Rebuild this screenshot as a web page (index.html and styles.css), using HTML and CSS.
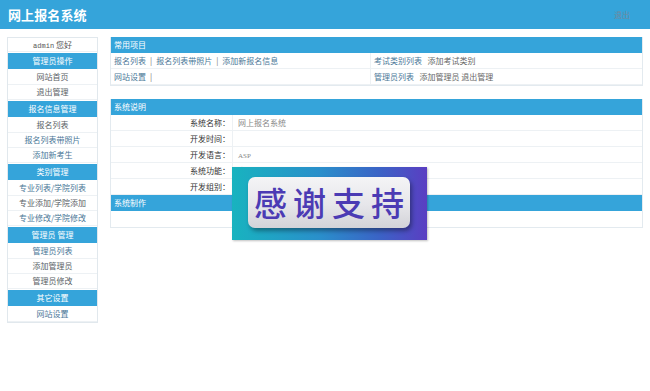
FILE: index.html
```html
<!DOCTYPE html>
<html lang="zh">
<head>
<meta charset="utf-8">
<title>网上报名系统</title>
<link rel="stylesheet" href="styles.css">
</head>
<body>
<header class="top">
  <div class="title">网上报名系统</div>
  <a class="logout">退出</a>
</header>
<div class="wrap">
  <aside class="side">
    <div class="item hello"><span class="mono">admin</span> 您好</div>
    <div class="head">管理员操作</div>
    <div class="item">网站首页</div>
    <div class="item">退出管理</div>
    <div class="head">报名信息管理</div>
    <div class="item">报名列表</div>
    <div class="item blue">报名列表带照片</div>
    <div class="item blue">添加新考生</div>
    <div class="head">类别管理</div>
    <div class="item blue">专业列表/学院列表</div>
    <div class="item">专业添加/学院添加</div>
    <div class="item blue">专业修改/学院修改</div>
    <div class="head">管理员 管理</div>
    <div class="item blue">管理员列表</div>
    <div class="item">添加管理员</div>
    <div class="item">管理员修改</div>
    <div class="head">其它设置</div>
    <div class="item blue">网站设置</div>
  </aside>
  <main class="main">
    <section class="box">
      <div class="bhead">常用项目</div>
      <div class="qrow">
        <div class="qcell left"><span class="lk">报名列表</span><span class="sep">|</span><span class="lk">报名列表带照片</span><span class="sep">|</span><span class="lk">添加新报名信息</span></div>
        <div class="qcell"><span class="lk">考试类别列表</span>&nbsp;&nbsp; <span class="gr">添加考试类别</span></div>
      </div>
      <div class="qrow">
        <div class="qcell left"><span class="lk">网站设置</span><span class="sep">|</span></div>
        <div class="qcell"><span class="lk">管理员列表</span>&nbsp;&nbsp; <span class="gr">添加管理员 退出管理</span></div>
      </div>
    </section>
    <section class="box second">
      <div class="bhead">系统说明</div>
      <div class="irow"><div class="lab">系统名称：</div><div class="val">网上报名系统</div></div>
      <div class="irow"><div class="lab">开发时间：</div><div class="val"></div></div>
      <div class="irow"><div class="lab">开发语言：</div><div class="val"><span class="serif">ASP</span></div></div>
      <div class="irow"><div class="lab">系统功能：</div><div class="val">审阅</div></div>
      <div class="irow"><div class="lab">开发组别：</div><div class="val"></div></div>
      <div class="bhead">系统制作</div>
      <div class="erow"></div>
    </section>
  </main>
</div>
<div class="thanks">
  <div class="plate">感谢支持</div>
</div>
</body>
</html>
```
FILE: styles.css
```css
* { box-sizing: border-box; }
body {
  margin: 0;
  background: #fff;
  font-family: "Noto Sans CJK SC", "Noto Sans", sans-serif;
  font-size: 8px;
  color: #555;
  position: relative;
  width: 650px;
  height: 391px;
  overflow: hidden;
}
.top {
  height: 29px;
  background: #35a4da;
  display: flex;
  align-items: center;
  justify-content: space-between;
  padding: 0 20px 0 8px;
}
.title {
  color: #fff;
  font-size: 13px;
  font-weight: 700;
  letter-spacing: 0.1px;
}
.logout {
  color: #74889a;
  font-size: 8px;
}
.wrap {
  display: flex;
  gap: 12px;
  padding: 8px 7px 0 7px;
}
.side {
  width: 91px;
  flex: none;
  border: 1px solid #e1e8ed;
  border-top: none;
}
.item {
  height: 15px;
  line-height: 14px;
  text-align: center;
  border-bottom: 1px solid #edf1f4;
  color: #5a5f66;
}
.item.blue { color: #4a7797; }
.hello { color: #555; border-top: 1px solid #e1e8ed; }
.mono {
  font-family: "Liberation Mono", monospace;
  font-size: 7px;
}
.head {
  height: 18px;
  line-height: 16px;
  background: #35a4da;
  border-top: 1px solid #fff;
  border-bottom: 1px solid #fff;
  color: #fff;
  text-align: center;
}
.main {
  flex: 1;
  min-width: 0;
}
.box {
  border: 1px solid #e3eaef;
  border-top: none;
}
.second { margin-top: 13px; }
.bhead {
  height: 16px;
  line-height: 15px;
  background: #35a4da;
  color: #fff;
  padding-left: 3px;
}
.qrow {
  display: flex;
  height: 16px;
  line-height: 15px;
  border-bottom: 1px solid #edf1f4;
}
.qcell {
  flex: 1;
  padding-left: 3px;
  color: #666;
}
.qcell.left {
  flex: none;
  width: 260px;
  border-right: 1px solid #edf1f4;
}
.sep {
  color: #777;
  margin: 0 4px;
}
.lk { color: #4a7797; }
.gr { color: #666; }
.irow {
  display: flex;
  height: 16px;
  line-height: 15px;
  border-bottom: 1px solid #edf1f4;
}
.lab {
  width: 122px;
  flex: none;
  text-align: right;
  color: #333;
  padding-right: 2px;
  border-right: 1px solid #edf1f4;
}
.val {
  flex: 1;
  padding-left: 5px;
  color: #888;
}
.serif {
  font-family: "Liberation Serif", serif;
  font-size: 7px;
}
.erow { height: 16px; }
.thanks {
  position: absolute;
  left: 232px;
  top: 167px;
  width: 195px;
  height: 73px;
  background: linear-gradient(90deg, #18b3bf 0%, #2a8fcb 45%, #3a64c6 75%, #5a3ec2 100%);
  padding: 10px 17px 12px 16px;
  box-shadow: 1px 1px 2px rgba(0,0,0,0.25);
}
.plate {
  height: 51px;
  border-radius: 7px;
  background: linear-gradient(180deg, #f4f4f6 0%, #e6e6ea 55%, #d3d3d8 100%);
  box-shadow: 2px 3px 4px rgba(0,0,0,0.35);
  color: #4b3bb4;
  font-size: 33px;
  font-weight: 500;
  letter-spacing: 6px;
  text-align: center;
  line-height: 50px;
  padding-left: 6px;
  white-space: nowrap;
}
```
